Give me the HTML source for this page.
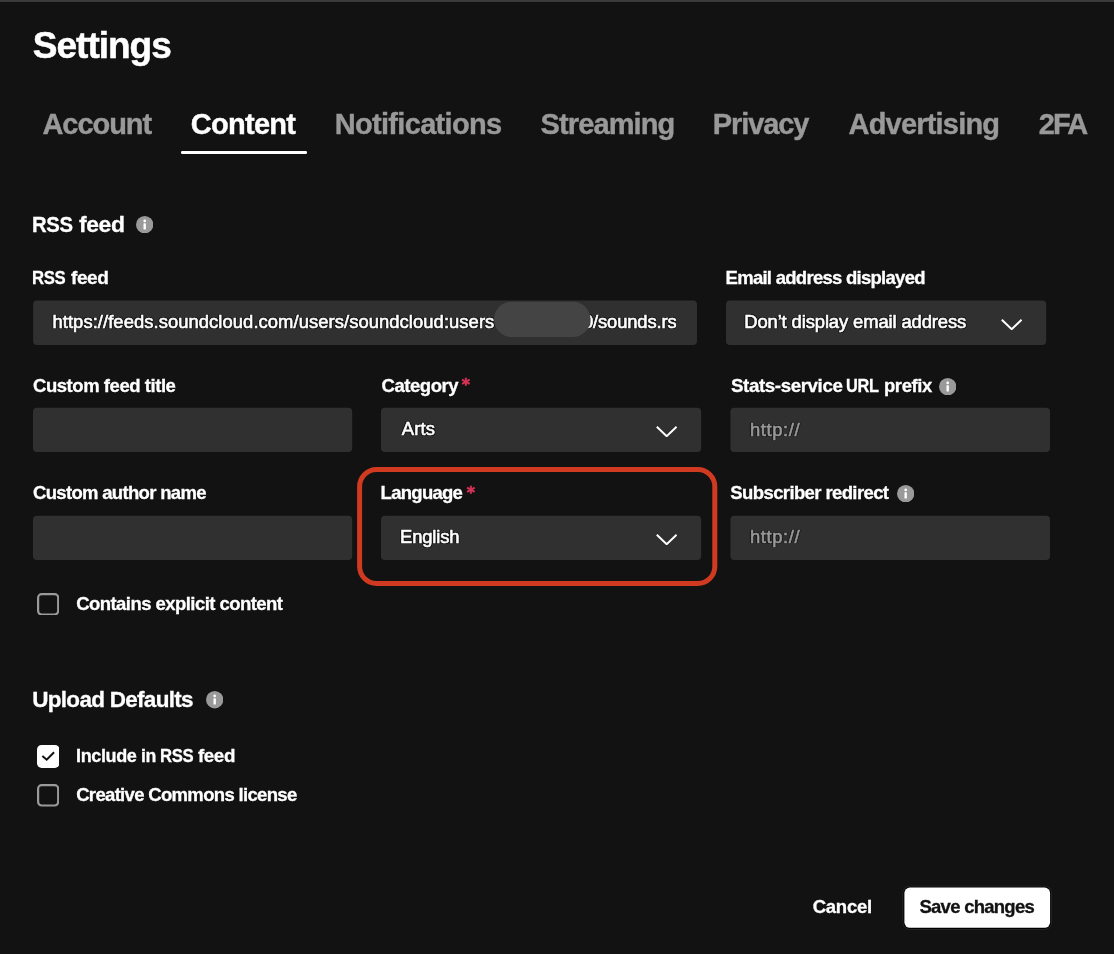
<!DOCTYPE html>
<html><head><meta charset="utf-8">
<style>
*{box-sizing:border-box;margin:0;padding:0}
html,body{width:1114px;height:954px;overflow:hidden;background:#121212;font-family:"Liberation Sans",sans-serif;color:#fff}
body{position:relative}
#wrap{position:absolute;left:0;top:0;width:1114px;height:954px;will-change:transform}
.abs{position:absolute;white-space:nowrap;line-height:1}
.w{position:absolute;top:0;white-space:nowrap}
.topbar{position:absolute;left:0;top:0;width:1114px;height:3px;background:linear-gradient(#3b3b3a 0,#3b3b3a 1.8px,#0f0f0f 2.4px,#0f0f0f 3px)}
.h1{top:26.7px;font-size:37px;font-weight:bold;-webkit-text-stroke:.5px}
.tab{font-size:29px;font-weight:bold;color:#999;top:110px;-webkit-text-stroke:.4px}
.tab.on{color:#fff}
.uline{position:absolute;left:181.4px;top:151px;width:125.3px;height:2.6px;background:#fff;border-radius:1.3px}
.h2{font-size:22.5px;font-weight:bold;-webkit-text-stroke:.3px}
.lbl{font-size:18.5px;font-weight:bold;-webkit-text-stroke:.3px}
.req{color:#dc3358;font-weight:bold;font-family:"DejaVu Sans","Liberation Sans",sans-serif;font-size:15.6px;-webkit-text-stroke:.65px}
.val{font-size:18.4px;color:#fff;-webkit-text-stroke:.6px;text-shadow:1.3px 0 .5px #181818,-1.3px 0 .5px #181818,0 1.3px .5px #181818,0 -1.3px .5px #181818,.9px .9px .5px #181818,-.9px .9px .5px #181818,.9px -.9px .5px #181818,-.9px -.9px .5px #181818}
.ph{font-size:18.4px;color:#999;-webkit-text-stroke:.6px;text-shadow:1.3px 0 .5px rgba(24,24,24,.6),-1.3px 0 .5px rgba(24,24,24,.6),0 1.3px .5px rgba(24,24,24,.6),0 -1.3px .5px rgba(24,24,24,.6),.9px .9px .5px rgba(24,24,24,.6),-.9px .9px .5px rgba(24,24,24,.6),.9px -.9px .5px rgba(24,24,24,.6),-.9px -.9px .5px rgba(24,24,24,.6)}
.info{position:absolute}
.chev{position:absolute;width:21.4px;height:11.4px}
</style></head><body>
<div id="wrap">
<div class="topbar"></div>
<svg style="position:absolute;left:0;top:0;width:1114px;height:954px" viewBox="0 0 1114 954">
<rect x="33.1" y="300.5" width="663.9" height="44.5" rx="4" fill="#303030"/>
<rect x="726.0" y="300.5" width="320.2" height="44.5" rx="4" fill="#303030"/>
<rect x="33.0" y="407.7" width="319.2" height="44.3" rx="4" fill="#303030"/>
<rect x="381.0" y="407.7" width="320.2" height="44.3" rx="4" fill="#303030"/>
<rect x="730.4" y="407.7" width="319.6" height="44.3" rx="4" fill="#303030"/>
<rect x="33.0" y="515.8" width="319.2" height="44.2" rx="4" fill="#303030"/>
<rect x="381.0" y="515.8" width="320.2" height="44.2" rx="4" fill="#303030"/>
<rect x="730.4" y="515.8" width="319.6" height="44.2" rx="4" fill="#303030"/>
<rect x="902.5" y="885.7" width="149.5" height="44" rx="7.4" fill="#2a2a2a"/>
<rect x="903.3" y="886.5" width="147.9" height="42.4" rx="6.6" fill="#000"/>
<rect x="904.4" y="887.6" width="145.7" height="40.2" rx="5.5" fill="#fff"/>
</svg>
<div id="h1" class="abs h1" style="left:32.86px;letter-spacing:-1.015px">Settings</div>

<div id="t1" class="abs tab" style="left:42.45px;letter-spacing:-1.055px">Account</div>
<div id="t2" class="abs tab on" style="left:190.85px;letter-spacing:-0.733px">Content</div>
<div id="t3" class="abs tab" style="left:334.75px;letter-spacing:-0.69px">Notifications</div>
<div id="t4" class="abs tab" style="left:540.61px;letter-spacing:-0.902px">Streaming</div>
<div id="t5" class="abs tab" style="left:712.7px;letter-spacing:-1.071px">Privacy</div>
<div id="t6" class="abs tab" style="left:848.51px;letter-spacing:-0.795px">Advertising</div>
<div id="t7" class="abs tab" style="left:1038.86px;letter-spacing:-1.94px">2FA</div>
<div class="uline"></div>

<div id="h2a" class="abs h2" style="left:0;top:214px"><span id="h2aw0" class="w" style="left:31.66px;letter-spacing:-0.4px;transform-origin:0 50%;transform:scaleX(0.901)">RSS</span> <span id="h2aw1" class="w" style="left:78.95px;letter-spacing:-0.4px;transform-origin:0 50%;transform:scaleX(1.02)">feed</span></div>
<svg class="info" style="left:136px;top:215.6px;width:17.4px;height:17.4px" viewBox="0 0 17.4 17.4"><circle cx="8.7" cy="8.7" r="8.7" fill="#9a9a9a"/><rect x="7.5" y="7.3" width="2.4" height="6.1" rx=".4" fill="#fff"/><circle cx="8.7" cy="4.95" r="1.35" fill="#fff"/></svg>

<div id="l1" class="abs lbl" style="left:0;top:269.4px"><span id="l1w0" class="w" style="left:32.0px;letter-spacing:-0.4px;transform-origin:0 50%;transform:scaleX(0.904)">RSS</span> <span id="l1w1" class="w" style="left:70.5px;letter-spacing:-0.4px;transform-origin:0 50%;transform:scaleX(1.028)">feed</span></div>
<div id="v1" class="abs val" style="left:52.45px;letter-spacing:0.066px;top:312.7px">https://feeds.soundcloud.com/users/soundcloud:users</div>
<div id="v1b" class="abs val" style="left:583.0px;letter-spacing:-0.147px;top:312.7px;clip-path:inset(-5px 0 -5px -5px)">0/sounds.rs</div>
<svg style="position:absolute;left:490px;top:298px;width:110px;height:44px" viewBox="0 0 110 44"><rect x="4" y="3.7" width="96.4" height="35.3" rx="17.6" fill="#444"/></svg>

<div id="l2" class="abs lbl" style="left:725.55px;letter-spacing:-0.725px;top:269.4px">Email address displayed</div>
<div id="v2" class="abs val" style="left:744.25px;letter-spacing:-0.113px;top:312.7px">Don’t display email address</div>
<svg class="chev" style="left:1001px;top:318.5px" viewBox="0 0 21.4 11.4"><path d="M.8 .8 L10.7 10.2 L20.6 .8" fill="none" stroke="#fff" stroke-width="2"/></svg>

<div id="l3" class="abs lbl" style="left:33.01px;letter-spacing:-0.45px;top:376.7px">Custom feed title</div>

<div id="l4" class="abs lbl" style="left:381.6px;letter-spacing:-0.469px;top:376.7px">Category</div>
<div id="a1" class="abs lbl req" style="left:461.8px;top:378.2px">*</div>
<div id="v4" class="abs val" style="left:401.7px;letter-spacing:0.184px;top:419.7px">Arts</div>
<svg class="chev" style="left:655.7px;top:426px" viewBox="0 0 21.4 11.4"><path d="M.8 .8 L10.7 10.2 L20.6 .8" fill="none" stroke="#fff" stroke-width="2"/></svg>

<div id="l5" class="abs lbl" style="left:0;top:376.7px"><span id="l5w0" class="w" style="left:730.86px;letter-spacing:-0.4px;transform-origin:0 50%;transform:scaleX(1.013)">Stats-service</span> <span id="l5w1" class="w" style="left:845.75px;letter-spacing:-0.4px;transform-origin:0 50%;transform:scaleX(0.884)">URL</span> <span id="l5w2" class="w" style="left:883.8px;letter-spacing:-0.4px;transform-origin:0 50%;transform:scaleX(0.997)">prefix</span></div>
<svg class="info" style="left:938.7px;top:377.8px;width:17.4px;height:17.4px" viewBox="0 0 17.4 17.4"><circle cx="8.7" cy="8.7" r="8.7" fill="#9a9a9a"/><rect x="7.5" y="7.3" width="2.4" height="6.1" rx=".4" fill="#fff"/><circle cx="8.7" cy="4.95" r="1.35" fill="#fff"/></svg>
<div id="p5" class="abs ph" style="left:749.91px;letter-spacing:0.606px;top:420.7px">http://</div>

<div id="l6" class="abs lbl" style="left:33.01px;letter-spacing:-0.68px;top:483.8px">Custom author name</div>

<svg style="position:absolute;left:350px;top:460px;width:380px;height:135px" viewBox="0 0 380 135"><rect x="9.6" y="9.5" width="355.2" height="114" rx="17" ry="17" fill="none" stroke="#d03a20" stroke-width="5"/></svg>
<div id="l7" class="abs lbl" style="left:380.61px;letter-spacing:-0.725px;top:483.8px">Language</div>
<div id="a2" class="abs lbl req" style="left:466.8px;top:485.6px">*</div>
<div id="v7" class="abs val" style="left:400.1px;letter-spacing:-0.164px;top:527.7px">English</div>
<svg class="chev" style="left:656px;top:533.6px" viewBox="0 0 21.4 11.4"><path d="M.8 .8 L10.7 10.2 L20.6 .8" fill="none" stroke="#fff" stroke-width="2"/></svg>

<div id="l8" class="abs lbl" style="left:730.36px;letter-spacing:-0.612px;top:483.8px">Subscriber redirect</div>
<svg class="info" style="left:896.7px;top:485px;width:17.4px;height:17.4px" viewBox="0 0 17.4 17.4"><circle cx="8.7" cy="8.7" r="8.7" fill="#9a9a9a"/><rect x="7.5" y="7.3" width="2.4" height="6.1" rx=".4" fill="#fff"/><circle cx="8.7" cy="4.95" r="1.35" fill="#fff"/></svg>
<div id="p8" class="abs ph" style="left:749.91px;letter-spacing:0.606px;top:527.9px">http://</div>

<svg style="position:absolute;left:36.6px;top:592.6px;width:22.3px;height:22.6px" viewBox="0 0 22.3 22.6"><rect x="1.1" y="1.1" width="20.1" height="20.4" rx="3.6" fill="none" stroke="#9a9a9a" stroke-width="2.2"/></svg>
<div id="l9" class="abs lbl" style="left:76.2px;letter-spacing:-0.548px;top:595.4px">Contains explicit content</div>

<div id="h2b" class="abs h2" style="left:32.25px;letter-spacing:-0.713px;top:689px">Upload Defaults</div>
<svg class="info" style="left:205.5px;top:691.2px;width:17.4px;height:17.4px" viewBox="0 0 17.4 17.4"><circle cx="8.7" cy="8.7" r="8.7" fill="#9a9a9a"/><rect x="7.5" y="7.3" width="2.4" height="6.1" rx=".4" fill="#fff"/><circle cx="8.7" cy="4.95" r="1.35" fill="#fff"/></svg>

<svg style="position:absolute;left:36.6px;top:745px;width:22.5px;height:22.9px" viewBox="0 0 22.5 22.9"><rect x="0" y="0" width="22.5" height="22.9" rx="4.6" fill="#fff"/><path d="M5.35 10.9 L9.7 14.7 L17.1 7.2" fill="none" stroke="#121212" stroke-width="2"/></svg>
<div id="l10" class="abs lbl" style="left:0;top:746.8px"><span id="l10w0" class="w" style="left:75.7px;letter-spacing:-0.4px;transform-origin:0 50%;transform:scaleX(0.976)">Include</span> <span id="l10w1" class="w" style="left:140.76px;letter-spacing:-0.4px;transform-origin:0 50%;transform:scaleX(0.957)">in</span> <span id="l10w2" class="w" style="left:159.55px;letter-spacing:-0.4px;transform-origin:0 50%;transform:scaleX(0.904)">RSS</span> <span id="l10w3" class="w" style="left:197.7px;letter-spacing:-0.4px;transform-origin:0 50%;transform:scaleX(1.014)">feed</span></div>

<svg style="position:absolute;left:36.8px;top:784.3px;width:22.3px;height:22.6px" viewBox="0 0 22.3 22.6"><rect x="1.1" y="1.1" width="20.1" height="20.4" rx="3.6" fill="none" stroke="#9a9a9a" stroke-width="2.2"/></svg>
<div id="l11" class="abs lbl" style="left:76.2px;letter-spacing:-0.674px;top:785.8px">Creative Commons license</div>

<div id="bc" class="abs lbl" style="left:812.71px;letter-spacing:-0.25px;top:897.5px">Cancel</div>
<div id="bs" class="abs lbl" style="left:919.46px;letter-spacing:-0.734px;top:897.5px;color:#121212">Save changes</div>
</div>
</body></html>
